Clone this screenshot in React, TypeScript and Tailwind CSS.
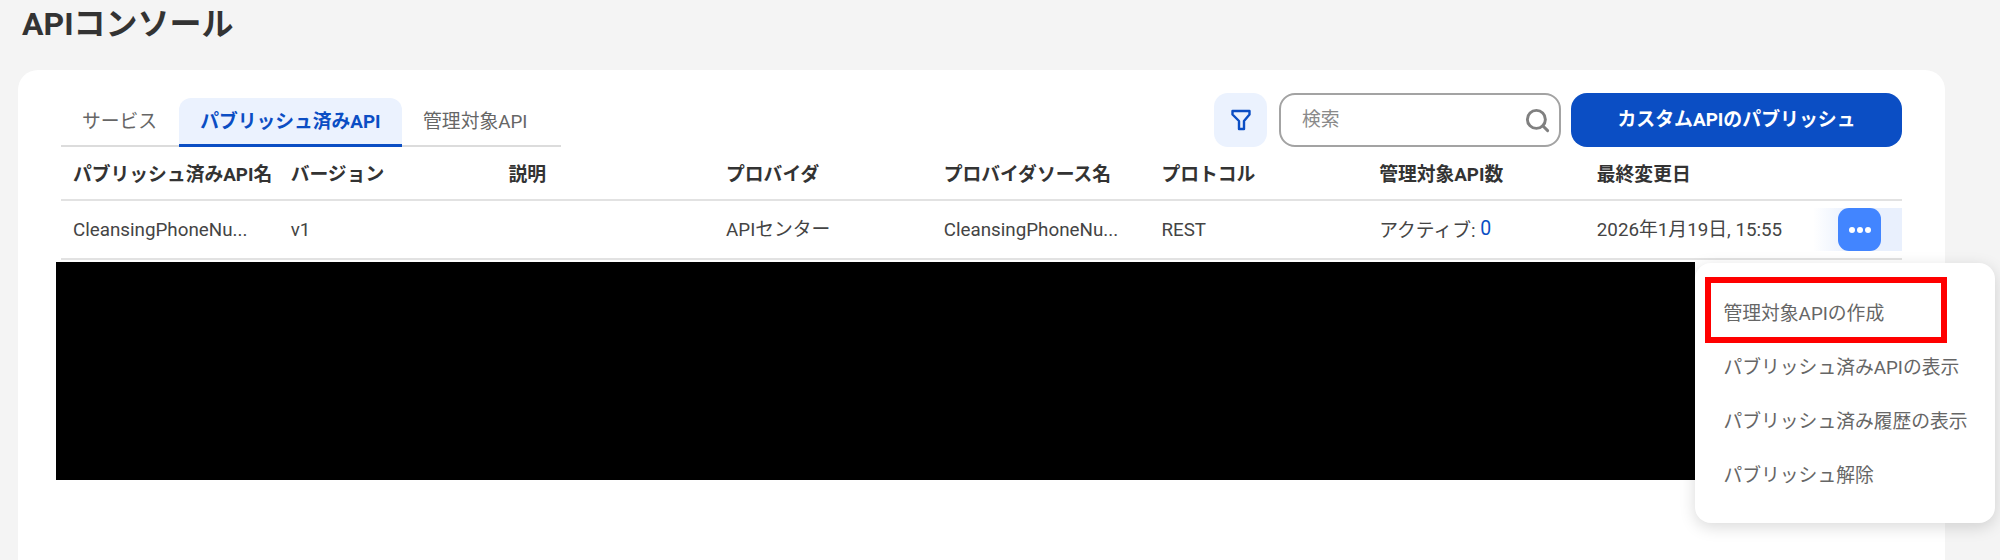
import React from "react";
import { Search } from "lucide-react";

const headers = ["パブリッシュ済みAPI名", "バージョン", "説明", "プロバイダ", "プロバイダソース名", "プロトコル", "管理対象API数", "最終変更日"];
const font = "font-['Roboto','Noto_Sans_CJK_JP',sans-serif]";

export default function App() {
  return (
    <div className={`relative h-[560px] w-[2000px] overflow-hidden bg-[#f4f4f4] text-[#333] ${font}`}>
      <h1 className="pl-[22px] pt-[3px] text-[32px] font-bold leading-[42px] h-[70px]">APIコンソール</h1>
      <main className="ml-[18px] h-[490px] w-[1927px] rounded-t-[20px] bg-white px-[43px] pt-[23px]">
        <div className="flex h-[54px] items-end justify-between">
          <div className="flex h-[49px] w-[500px] border-b-2 border-[#dcdcdc] text-[18.8px]">
            <div className="-mb-[2px] flex items-center pl-[21px] pr-[22px] text-[#666]">サービス</div>
            <div className="-mb-[2px] flex items-center rounded-t-[12px] border-b-[3px] border-[#0b4ec4] bg-[#ebf2fe] pl-[21px] pr-[21.5px] pt-[3px] font-bold text-[#0b4ec4]">パブリッシュ済みAPI</div>
            <div className="-mb-[2px] flex items-center px-[21px] text-[#666]">管理対象API</div>
          </div>
          <div className="flex h-[54px] items-stretch">
            <button className="flex w-[53px] items-center justify-center rounded-[14px] bg-[#ebf2fe]">
              <svg width="22" height="24" viewBox="0 0 22 24" fill="none" stroke="#0b4ec4" strokeWidth="2.4" strokeLinejoin="round">
                <path d="M2.5 3h17v3.5l-5.5 6.5v8h-5v-8L2.5 6.5z" />
              </svg>
            </button>
            <div className="ml-3 flex w-[282px] items-center justify-between rounded-[16px] border-2 border-[#a3a3a3] bg-white pl-[21px] pr-[8px] text-[18.8px] text-[#8a8a8a]">
              <span>検索</span>
              <Search size={27} strokeWidth={2.6} className="text-[#808080]" />
            </div>
            <button className="ml-[10px] w-[331px] rounded-[16px] bg-[#0b4ec4] text-[18.9px] font-bold text-white">カスタムAPIのパブリッシュ</button>
          </div>
        </div>
        <div className="grid h-[54px] grid-cols-[repeat(7,217.7px)_1fr] items-center border-b-2 border-[#e2e2e2] pt-[4px] text-[18.8px] font-bold">
          {headers.map((h) => (
            <div key={h} className="whitespace-nowrap pl-3">{h}</div>
          ))}
        </div>
        <div className="grid h-[59px] grid-cols-[repeat(7,217.7px)_1fr] items-center border-b-2 border-[#e2e2e2] text-[18.8px] text-[#444]">
          <div className="pl-3 pt-[2px]">CleansingPhoneNu...</div>
          <div className="pl-3 pt-[2px]">v1</div>
          <div className="pl-3"></div>
          <div className="pl-3 pt-[2px]">APIセンター</div>
          <div className="pl-3 pt-[2px]">CleansingPhoneNu...</div>
          <div className="pl-3 pt-[2px]">REST</div>
          <div className="pl-3 pt-[2px]">アクティブ: <span className="relative -top-[2px] text-[19.5px] text-[#0b4ec4]">0</span></div>
          <div className="flex h-full items-center justify-between pl-3">
            <span className="whitespace-nowrap pt-[2px]">2026年1月19日, 15:55</span>
            <div className="flex h-[43px] w-[89px] items-center justify-start bg-gradient-to-r from-white to-[#e9f0fd] to-40% pl-[25px]">
              <button className="flex h-[43px] w-[43px] items-center justify-center gap-[2px] rounded-[11px] bg-[#4285ff]">
                <span className="h-[6px] w-[6px] rounded-full bg-white" />
                <span className="h-[6px] w-[6px] rounded-full bg-white" />
                <span className="h-[6px] w-[6px] rounded-full bg-white" />
              </button>
            </div>
          </div>
        </div>
        <div className="-ml-[5px] mt-[2px] h-[218px] w-[1639px] bg-black" />
      </main>
      <div className="absolute left-[1695px] top-[263px] flex h-[260px] w-[300px] flex-col rounded-[16px] bg-white pl-[28.5px] pt-[24px] text-[18.8px] text-[#666] shadow-[0_4px_16px_rgba(0,0,0,0.15)]">
        {["管理対象APIの作成", "パブリッシュ済みAPIの表示", "パブリッシュ済み履歴の表示", "パブリッシュ解除"].map((t) => (
          <div key={t} className="flex h-[54px] items-center whitespace-nowrap">{t}</div>
        ))}
      </div>
      <div className="absolute left-[1705px] top-[277px] h-[66px] w-[242px] border-[6px] border-[#ff0000]" />
    </div>
  );
}
